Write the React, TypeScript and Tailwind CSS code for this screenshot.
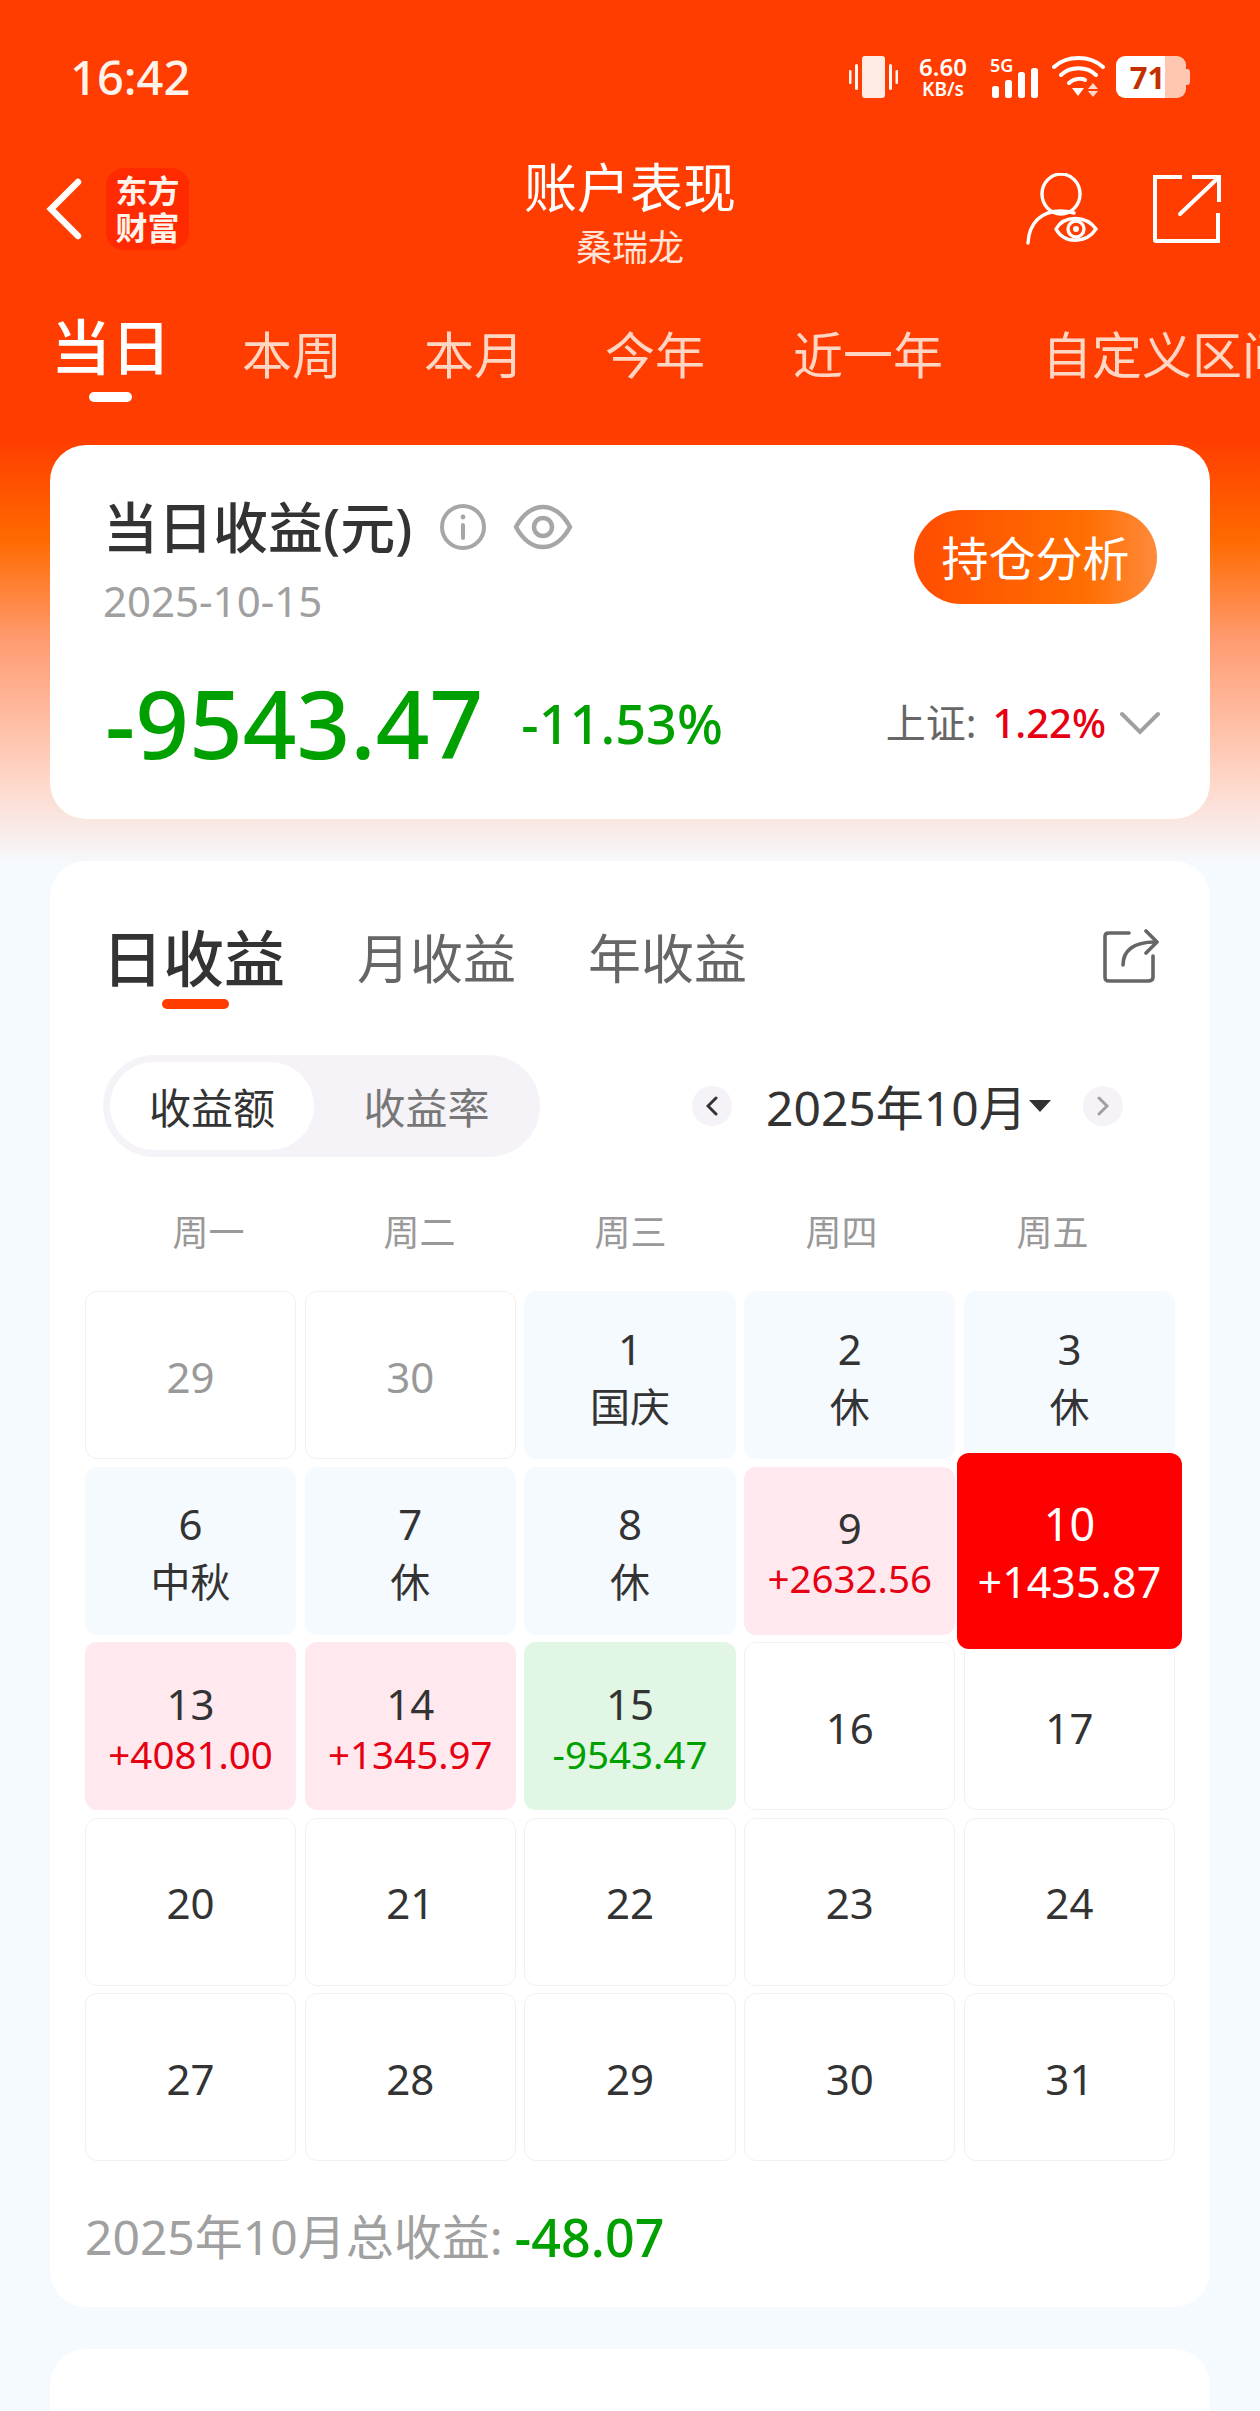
import React from 'react';

type CellKind = 'plain' | 'muted' | 'holiday' | 'up' | 'down' | 'active';

interface CellData {
  day: number;
  sub?: string;
  kind: CellKind;
}

const weekdays = ['周一', '周二', '周三', '周四', '周五'];

const cells: CellData[] = [
  { day: 29, kind: 'muted' },
  { day: 30, kind: 'muted' },
  { day: 1, sub: '国庆', kind: 'holiday' },
  { day: 2, sub: '休', kind: 'holiday' },
  { day: 3, sub: '休', kind: 'holiday' },
  { day: 6, sub: '中秋', kind: 'holiday' },
  { day: 7, sub: '休', kind: 'holiday' },
  { day: 8, sub: '休', kind: 'holiday' },
  { day: 9, sub: '+2632.56', kind: 'up' },
  { day: 10, sub: '+1435.87', kind: 'active' },
  { day: 13, sub: '+4081.00', kind: 'up' },
  { day: 14, sub: '+1345.97', kind: 'up' },
  { day: 15, sub: '-9543.47', kind: 'down' },
  { day: 16, kind: 'plain' },
  { day: 17, kind: 'plain' },
  { day: 20, kind: 'plain' },
  { day: 21, kind: 'plain' },
  { day: 22, kind: 'plain' },
  { day: 23, kind: 'plain' },
  { day: 24, kind: 'plain' },
  { day: 27, kind: 'plain' },
  { day: 28, kind: 'plain' },
  { day: 29, kind: 'plain' },
  { day: 30, kind: 'plain' },
  { day: 31, kind: 'plain' },
];

const cellBox: Record<CellKind, string> = {
  plain: 'pt-[3px] bg-white border border-[#f1f1f1] text-[#333333]',
  muted: 'pt-[3px] bg-white border border-[#f1f1f1] text-[#999999]',
  holiday: 'pt-[5px] bg-[#f5faff] text-[#333333]',
  up: 'pt-[5px] bg-[#ffe9ee] text-[#333333]',
  down: 'pt-[5px] bg-[#e1f6e4] text-[#333333]',
  active: 'pt-[4px] bg-[#ff0000] text-white relative z-10 -mx-[7px] -mt-[14px] -mb-[14px]',
};

const numText: Record<CellKind, string> = {
  plain: 'text-[42px] leading-[58px]',
  muted: 'text-[42px] leading-[58px]',
  holiday: 'text-[42px] leading-[58px]',
  up: 'text-[42px] leading-[51px]',
  down: 'text-[42px] leading-[51px]',
  active: 'text-[45px] leading-[58px]',
};

const subText: Record<CellKind, string> = {
  plain: '',
  muted: '',
  holiday: 'text-[40px] leading-[58px] text-[#333333]',
  up: 'text-[38.5px] leading-[51px] text-[#e60012]',
  down: 'text-[38.5px] leading-[51px] text-[#00a000]',
  active: 'text-[43px] leading-[58px] text-white',
};

const DayCell = ({ day, sub, kind }: CellData) => (
  <div className={`rounded-[12px] flex flex-col items-center justify-center ${cellBox[kind]}`}>
    <span className={numText[kind]}>{day}</span>
    {sub && <span className={subText[kind]}>{sub}</span>}
  </div>
);

const StatusIcons = () => (
  <div className="flex items-center text-white">
    <svg width="49" height="42" viewBox="0 0 49 42" fill="#fff" className="opacity-95">
      <rect x="13" y="0" width="23" height="42" rx="3" fill="#fff5f0" />
      <rect x="0" y="14" width="2.5" height="14" rx="1" />
      <rect x="6" y="8" width="3" height="26" rx="1.5" />
      <rect x="40" y="8" width="3" height="26" rx="1.5" />
      <rect x="46.5" y="14" width="2.5" height="14" rx="1" />
    </svg>
    <div className="ml-[18px] flex w-[54px] flex-col items-center font-semibold leading-none">
      <span className="text-[24px] leading-[24px]">6.60</span>
      <span className="text-[19px] leading-[20px]">KB/s</span>
    </div>
    <div className="relative ml-[20px] h-[42px] w-[50px]">
      <span className="absolute left-0 top-[-2px] text-[18px] font-semibold leading-[22px]">5G</span>
      <svg width="50" height="42" viewBox="0 0 50 42" fill="#fff" className="absolute inset-0">
        <rect x="2" y="30" width="7" height="12" rx="2.5" />
        <rect x="15" y="24" width="7" height="18" rx="2.5" />
        <rect x="28" y="16" width="7" height="26" rx="2.5" />
        <rect x="41" y="12" width="7" height="30" rx="2.5" />
      </svg>
    </div>
    <svg width="53" height="42" viewBox="0 0 53 42" fill="none" stroke="#fff" strokeWidth="4" strokeLinecap="round" className="ml-[12px]">
      <path d="M2 11 C15 -1 38 -1 51 11" />
      <path d="M9 19 C18 10 35 10 44 19" />
      <path d="M17 27 C22 22 31 22 33 24" />
      <path d="M20 32 H32 L26 40 Z" fill="#fff" stroke="none" />
      <path d="M41 27 L46 33 H36 Z M36 35 H46 L41 41 Z" fill="#ffd9cc" stroke="none" />
    </svg>
    <div className="relative ml-[11px] flex h-[42px] w-[70px] items-center overflow-hidden rounded-[9px] bg-[#ffc7b2]">
      <div className="flex h-full w-[49px] items-center justify-center rounded-l-[9px] bg-white pl-[14px]">
        <span className="text-[31px] font-bold leading-none text-[#c23000]">71</span>
      </div>
    </div>
    <div className="h-[16px] w-[4px] rounded-r-[3px] bg-[#ffc7b2]" />
  </div>
);

const UserEyeIcon = () => (
  <svg width="72" height="72" viewBox="0 0 72 72" fill="none" stroke="#fff" strokeWidth="3.4" strokeLinecap="round">
    <ellipse cx="35" cy="21" rx="19" ry="20" />
    <path d="M2 70 C3 50 15 38 35 38 C39 38 44 39 48 40" />
    <path d="M30 56 C38 42 60 42 70 56 C60 71 38 71 30 56 Z" />
    <circle cx="50" cy="56" r="8" />
    <circle cx="50" cy="56" r="3" fill="#fff" stroke="none" />
  </svg>
);

const ShareIcon = () => (
  <svg width="70" height="70" viewBox="0 0 70 70" fill="none" stroke="#fff" strokeWidth="4" strokeLinecap="square">
    <path d="M28 3 H3 V66 C3 67 3 67 4 67 H66 V41" />
    <path d="M28 40 L66 4" strokeLinecap="round" />
    <path d="M42 3 H67 V26" />
  </svg>
);

const App: React.FC = () => {
  return (
    <div className="relative h-[2411px] w-[1260px] overflow-hidden bg-[linear-gradient(180deg,#ff3d00_0,#ff3d00_440px,#ff6a00_540px,#ff9b70_640px,#ffd2c2_770px,#f5faff_866px)] font-['Noto_Sans','Noto_Sans_CJK_SC',sans-serif]">
      {/* Status bar */}
      <div className="flex h-[99px] items-end justify-between pl-[70px] pr-[70px]">
        <span className="text-[47px] font-medium leading-[44px] text-[#fff3ec]">16:42</span>
        <StatusIcons />
      </div>

      {/* Title bar */}
      <div className="mt-[60px] grid h-[100px] grid-cols-[1fr_auto_1fr] grid-rows-[100px] items-center">
        <div className="flex items-center pl-[46px]">
          <svg width="36" height="62" viewBox="0 0 36 62" fill="none" stroke="#fff" strokeWidth="6.5" strokeLinecap="round">
            <path d="M32 4 L5 31 L32 58" />
          </svg>
          <div className="ml-[24px] flex h-[82px] w-[83px] flex-col items-center justify-center rounded-[18px] bg-[#ff2a00] text-[32px] font-semibold leading-[37px] text-[#fff3ec]">
            <span>东方</span>
            <span>财富</span>
          </div>
        </div>
        <div className="flex h-[100px] flex-col items-center pt-[3px] text-white">
          <span className="text-[53px] leading-[52px]">账户表现</span>
          <span className="mt-[16px] text-[36px] leading-[36px] text-[#ffe4d8]">桑瑞龙</span>
        </div>
        <div className="flex items-center justify-end gap-[54px] pr-[38px]">
          <UserEyeIcon />
          <ShareIcon />
        </div>
      </div>

      {/* Range tabs */}
      <div className="relative mt-[50px] flex h-[72px] items-end whitespace-nowrap pl-[51px] text-[50px] leading-[51px] text-[#ffd6c4]">
        <span className="text-[60px] font-medium leading-[68px] text-white">当日</span>
        <span className="ml-[71px]">本周</span>
        <span className="ml-[82px]">本月</span>
        <span className="ml-[81px]">今年</span>
        <span className="ml-[88px]">近一年</span>
        <span className="ml-[99px]">自定义区间</span>
      </div>
      <div className="ml-[89px] mt-[11px] h-[10px] w-[43px] rounded-full bg-white" />

      {/* Today card */}
      <div className="mx-[50px] mt-[43px] h-[374px] rounded-[36px] bg-white pl-[53px] pr-[50px] pt-[50px]">
        <div className="flex items-start justify-between">
          <div>
            <div className="flex items-center">
              <span className="text-[55px] font-medium leading-[64px] text-[#333333]">当日收益(元)</span>
              <svg width="48" height="48" viewBox="0 0 48 48" fill="none" stroke="#a6a6a6" strokeWidth="4" strokeLinecap="round" className="ml-[27px]">
                <circle cx="24" cy="24" r="21" />
                <path d="M24 22 V35" />
                <circle cx="24" cy="14" r="2.4" fill="#a6a6a6" stroke="none" />
              </svg>
              <svg width="60" height="46" viewBox="0 0 60 46" fill="none" stroke="#a6a6a6" strokeWidth="4.5" strokeLinejoin="round" className="ml-[26px]">
                <path d="M3 23 C10 10 20 3 30 3 C40 3 50 10 57 23 C50 36 40 43 30 43 C20 43 10 36 3 23 Z" />
                <circle cx="30" cy="23" r="9" />
              </svg>
            </div>
            <div className="mt-[18px] text-[42px] leading-[48px] text-[#a0a0a0]">2025-10-15</div>
          </div>
          <div className="mr-[3px] mt-[15px] flex h-[94px] w-[243px] items-center justify-center rounded-full bg-[linear-gradient(90deg,#ff4d00,#ff6e00_70%,#ff8a3c)] pt-[3px] text-[47px] text-white">
            持仓分析
          </div>
        </div>
        <div className="mt-[43px] flex items-center">
          <span className="pl-[2px] text-[94px] font-medium leading-[110px] text-[#00a000]">-9543.47</span>
          <span className="ml-[38px] text-[54px] font-medium leading-[70px] text-[#00a000]">-11.53%</span>
          <div className="ml-auto flex items-center">
            <span className="text-[40px] text-[#666666]">上证:</span>
            <span className="ml-[16px] text-[40px] font-medium text-[#e60012]">1.22%</span>
            <svg width="40" height="24" viewBox="0 0 40 24" fill="none" stroke="#a0a0a0" strokeWidth="4" strokeLinecap="round" className="ml-[14px]">
              <path d="M2 3 L20 21 L38 3" />
            </svg>
          </div>
        </div>
      </div>

      {/* Calendar card */}
      <div className="mx-[50px] mt-[42px] h-[1446px] rounded-[36px] bg-white px-[35px] pt-[60px]">
        <div className="flex items-center pl-[17px] pr-[16px]">
          <span className="text-[61px] font-medium leading-[76px] text-[#333333]">日收益</span>
          <span className="ml-[72px] text-[53px] leading-[76px] text-[#666666]">月收益</span>
          <span className="ml-[72px] text-[53px] leading-[76px] text-[#666666]">年收益</span>
          <svg width="56" height="56" viewBox="0 0 56 56" fill="none" stroke="#666666" strokeWidth="3.6" strokeLinecap="round" strokeLinejoin="round" className="ml-auto -mt-[6px]">
            <path d="M26 5 H6 C3 5 2 6 2 9 V49 C2 52 3 53 6 53 H45 C48 53 50 52 50 49 V28" />
            <path d="M20 37 C20 23 30 14 52 14" />
            <path d="M43 3 L54 14 L43 25" />
          </svg>
        </div>
        <div className="ml-[77px] mt-[2px] h-[10px] w-[67px] rounded-full bg-[#ff3d00]" />

        <div className="mt-[46px] flex items-center">
          <div className="ml-[18px] flex h-[102px] w-[437px] items-center rounded-full bg-[#f6f3f8] p-[7px] text-[42px]">
            <div className="flex h-full w-[204px] items-center justify-center rounded-full bg-white pt-[2px] text-[#333333]">收益额</div>
            <div className="flex flex-1 items-center justify-center pl-[6px] pt-[2px] text-[#777777]">收益率</div>
          </div>
          <div className="ml-[152px] flex h-[40px] w-[40px] items-center justify-center rounded-full bg-[#f6f3f8]">
            <svg width="12" height="20" viewBox="0 0 12 20" fill="none" stroke="#333333" strokeWidth="3" strokeLinecap="round">
              <path d="M10 2 L2 10 L10 18" />
            </svg>
          </div>
          <span className="ml-[34px] pt-[3px] text-[48px] leading-[60px] text-[#333333]">2025年10月</span>
          <svg width="22" height="12" viewBox="0 0 22 12" fill="#333333" className="ml-[2px]">
            <path d="M0 0 H22 L11 12 Z" />
          </svg>
          <div className="ml-[32px] flex h-[40px] w-[40px] items-center justify-center rounded-full bg-[#f6f3f8]">
            <svg width="12" height="20" viewBox="0 0 12 20" fill="none" stroke="#a0a0a0" strokeWidth="3" strokeLinecap="round">
              <path d="M2 2 L10 10 L2 18" />
            </svg>
          </div>
        </div>

        <div className="mt-[51px] grid w-[1073px] grid-cols-5 pl-[18px] text-center text-[36px] leading-[50px] text-[#999999]">
          {weekdays.map((d) => (
            <span key={d}>{d}</span>
          ))}
        </div>

        <div className="mt-[33px] grid grid-cols-5 auto-rows-[168px] gap-x-[8.5px] gap-y-[7.5px]">
          {cells.map((c, i) => (
            <DayCell key={i} {...c} />
          ))}
        </div>

        <div className="mt-[46px] flex items-center text-[48px] leading-[60px] text-[#a0a0a0]">
          <span>2025年10月总收益:</span>
          <span className="ml-[12px] text-[52px] font-medium text-[#00a000]">-48.07</span>
        </div>
      </div>

      {/* Next card, cut off by the screen */}
      <div className="mx-[50px] mt-[42px] h-[200px] rounded-[36px] bg-white" />
    </div>
  );
};

export default App;
